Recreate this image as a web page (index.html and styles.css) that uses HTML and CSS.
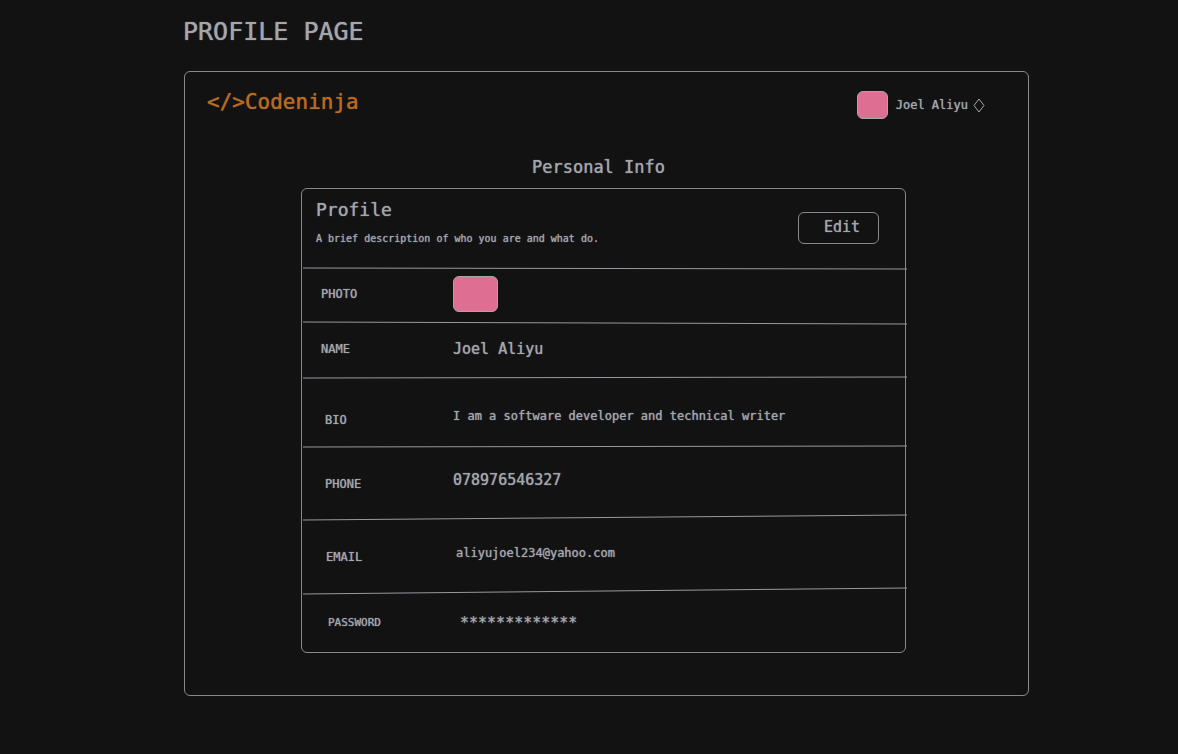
FILE: index.html
```html
<!DOCTYPE html>
<html lang="en">
<head>
<meta charset="utf-8">
<meta name="viewport" content="width=device-width, initial-scale=1">
<title>Profile page</title>
<link rel="stylesheet" href="styles.css">
</head>
<body class="page">
<h1 class="page-title">PROFILE PAGE</h1>
<main class="board">
  <header class="topbar">
    <a class="logo" href="#">&lt;/&gt;Codeninja</a>
    <button class="account" type="button">
      <span class="avatar"></span>
      <span>Joel Aliyu</span>
      <svg class="diamond" width="12" height="15" viewBox="0 0 12 15" aria-hidden="true"><path d="M6 1 11 7.500 6 14 1 7.500Z"/></svg>
    </button>
  </header>
  <h2 class="section-title">Personal Info</h2>
  <section class="card">
    <div class="card-head">
      <div>
        <h3 class="card-title">Profile</h3>
        <p class="card-note">A brief description of who you are and what do.</p>
      </div>
      <button class="edit" type="button">Edit</button>
    </div>
    <svg class="divider" height="2" aria-hidden="true"><line x1="0" y1="0" x2="100%" y2="1"/></svg>
    <div class="row">
      <span class="label">PHOTO</span>
      <span class="avatar avatar-large"></span>
    </div>
    <svg class="divider" height="3" aria-hidden="true"><line x1="0" y1="0" x2="100%" y2="2"/></svg>
    <div class="row">
      <span class="label">NAME</span>
      <span class="value value-large">Joel Aliyu</span>
    </div>
    <svg class="divider" height="2" aria-hidden="true"><line x1="0" y1="1" x2="100%" y2="0"/></svg>
    <div class="row row-tall row-low">
      <span class="label">BIO</span>
      <span class="value">I am a software developer and technical writer</span>
    </div>
    <svg class="divider" height="2" aria-hidden="true"><line x1="0" y1="1" x2="100%" y2="0"/></svg>
    <div class="row row-tall">
      <span class="label">PHONE</span>
      <span class="value value-large">078976546327</span>
    </div>
    <svg class="divider" height="6" aria-hidden="true"><line x1="0" y1="5" x2="100%" y2="0"/></svg>
    <div class="row row-tall row-inset">
      <span class="label">EMAIL</span>
      <span class="value">aliyujoel234@yahoo.com</span>
    </div>
    <svg class="divider" height="7" aria-hidden="true"><line x1="0" y1="6" x2="100%" y2="0"/></svg>
    <div class="row row-last">
      <span class="label label-small">PASSWORD</span>
      <span class="value value-large">*************</span>
    </div>
  </section>
</main>
</body>
</html>
```
FILE: styles.css
```css
* { box-sizing: border-box; }

.page {
  margin: 0;
  padding: 0 149px 56px 184px;
  background: #121212;
  color: #a2a6ad;
  font-family: "DejaVu Sans Mono", "Liberation Mono", monospace;
  font-size: 12px;
  text-shadow: 0 0 1px currentColor;
}

h1, h2, h3, p { margin: 0; font-weight: 400; }

button {
  padding: 0;
  border: 0;
  background: none;
  color: inherit;
  font: inherit;
  text-shadow: inherit;
  cursor: pointer;
}

.page-title {
  margin-left: -1px;
  padding: 17px 0 24px;
  font-size: 25px;
  line-height: 30px;
}

.board {
  padding-bottom: 42px;
  border: 1px solid #85898e;
  border-radius: 6px;
}

.topbar {
  display: flex;
  justify-content: space-between;
  align-items: flex-start;
  padding: 19px 43px 0 22px;
}

.logo {
  color: #b86b22;
  font-size: 21px;
  line-height: 22px;
  text-decoration: none;
}

.account { display: flex; align-items: center; }

.avatar {
  width: 31px;
  height: 28px;
  margin-right: 8px;
  border: 1px solid #a9a6ac;
  border-radius: 6px;
  background: #de6f92;
}

.avatar-large { width: 45px; height: 36px; }

.diamond { margin-left: 5px; fill: none; stroke: #a2a6ad; }

.section-title {
  padding: 38px 0 11px;
  text-align: center;
  text-indent: -16px;
  font-size: 17px;
  line-height: 20px;
}

.card {
  margin: 0 122px 0 116px;
  border: 1px solid #85898e;
  border-radius: 6px;
}

.card-head {
  display: flex;
  justify-content: space-between;
  align-items: center;
  min-height: 78px;
  padding: 0 26px 0 14px;
}

.card-title { font-size: 18px; line-height: 24px; }
.card-note { padding: 11px 0 13px; font-size: 10px; line-height: 12px; }

.edit {
  padding: 5px 18px 7px 25px;
  border: 1px solid #85898e;
  border-radius: 6px;
  font-size: 15px;
  line-height: 18px;
}

.divider {
  display: block;
  width: calc(100% + 1px);
  margin-left: 1px;
  overflow: visible;
}

.divider line { stroke: #96999f; transform: translateY(1px); }

.row {
  display: grid;
  grid-template-columns: 132px 1fr;
  align-items: center;
  min-height: 52px;
  padding: 0 0 2px 19px;
}

.row-tall {
  grid-template-columns: 128px 1fr;
  min-height: 67px;
  padding: 0 0 0 23px;
}

.row-tall .label { padding-top: 6px; }
.row-tall .value { padding-bottom: 2px; }
.row-low { padding-top: 10px; }
.row-inset { grid-template-columns: 130px 1fr; padding-left: 24px; }
.row-last { grid-template-columns: 132px 1fr; min-height: 58px; padding: 0 0 0 26px; }

.label { line-height: 16px; }
.label-small { font-size: 11px; }
.value { line-height: 20px; }
.value-large { font-size: 15px; }
```
